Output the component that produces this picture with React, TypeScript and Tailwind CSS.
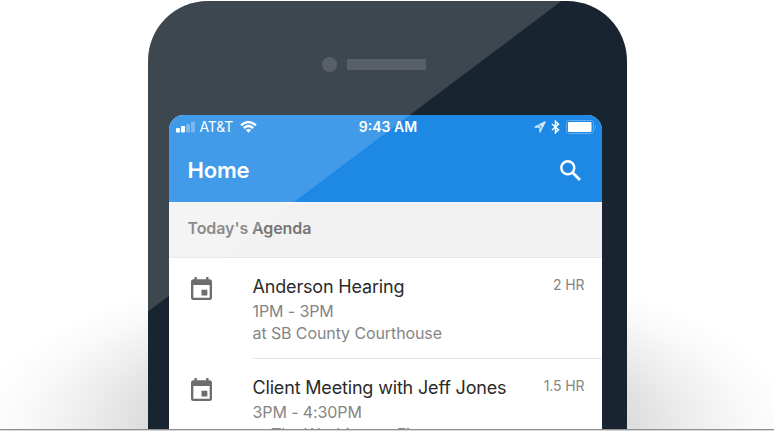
type Appointment = {
  title: string;
  time: string;
  place: string;
  duration: string;
};

const appointments: Appointment[] = [
  { title: 'Anderson Hearing', time: '1PM - 3PM', place: 'at SB County Courthouse', duration: '2 HR' },
  { title: 'Client Meeting with Jeff Jones', time: '3PM - 4:30PM', place: 'at The Washington Firm', duration: '1.5 HR' },
];

function EventIcon() {
  return (
    <svg viewBox="3 1 18 20" className="mt-[19px] h-[23px] w-[21px] shrink-0 fill-[#6d6d6d]" preserveAspectRatio="none">
      <path d="M17 12h-5v5h5v-5zM16 1v2H8V1H6v2H5c-1.11 0-1.99.9-1.99 2L3 19a2 2 0 0 0 2 2h14c1.100 0 2-.9 2-2V5c0-1.100-.9-2-2-2h-1V1h-2zm3 18H5V8h14v11z" />
    </svg>
  );
}

function StatusBar() {
  return (
    <div className="grid h-[24px] grid-cols-3 items-center text-[14px] leading-none text-white">
      <div className="flex items-center pl-[7px]">
        <svg width="20" height="12" viewBox="0 0 20 12" fill="#fff">
          <rect x="0" y="7" width="4" height="4.500" rx="1" />
          <rect x="5" y="5" width="4" height="6.500" rx="1" />
          <rect x="10" y="3" width="4" height="8.500" rx="1" opacity="0.3" />
          <rect x="15" y="0.500" width="4" height="11" rx="1" opacity="0.3" />
        </svg>
        <span className="ml-[4px] tracking-[-0.2px]">AT&amp;T</span>
        <svg className="ml-[7px]" width="17" height="12" viewBox="0 0 17 12" fill="none" stroke="#fff">
          <path d="M1 4.300Q8.500 -2.200 16 4.300" strokeWidth="2.200" />
          <path d="M3.700 7.100Q8.500 2.900 13.300 7.100" strokeWidth="2.200" />
          <path d="M5.800 9.100Q8.500 6.900 11.200 9.100L8.500 11.800Z" fill="#fff" stroke="none" />
        </svg>
      </div>
      <span className="pl-[6px] text-center font-semibold">9:43 AM</span>
      <div className="flex items-center justify-end pr-[4px]">
        <svg width="12" height="12" viewBox="0 0 12 12" fill="none" stroke="#d5e9fb" strokeWidth="1.300" strokeLinejoin="round">
          <path d="M10.800 1.200L1 6H6V11Z" />
          <path d="M10.800 1.200L6.500 3.500L8.500 5.800Z" fill="#d5e9fb" />
        </svg>
        <svg className="ml-[5px]" width="9" height="14" viewBox="0 0 9 14" fill="none" stroke="#fff" strokeWidth="1.500">
          <path d="M1 4L7.500 9.800L4.500 12.600V1.400L7.500 4.200L1 10" />
        </svg>
        <svg className="ml-[6px]" width="31" height="14" viewBox="0 0 31 14">
          <rect x="0.500" y="0.500" width="27" height="13" rx="3" fill="none" stroke="#64acef" />
          <rect x="2" y="2" width="23.500" height="10" rx="1" fill="#fff" />
          <path d="M29 5Q30.500 7 29 9Z" fill="#8ec3f3" />
        </svg>
      </div>
    </div>
  );
}

function AppointmentRow({ item }: { item: Appointment }) {
  return (
    <li className="flex h-[101px] shrink-0 pl-[22px]">
      <EventIcon />
      <div className="ml-[41px] flex flex-1 justify-between border-b border-[#e6e6e6] pr-[17px] whitespace-nowrap">
        <div className="pt-[17px] text-[16px] leading-[22px] tracking-[-0.1px] text-[#858585]">
          <h2 className="mb-px text-[18px] leading-[24px] tracking-[-0.17px] text-[#2b2b2b]">{item.title}</h2>
          <p>{item.time}</p>
          <p>{item.place}</p>
        </div>
        <span className="pt-[18px] text-[14px] leading-[18px] tracking-[-0.1px] text-[#858585]">{item.duration}</span>
      </div>
    </li>
  );
}

export default function App() {
  return (
    <main className="h-[435px] w-[774px] overflow-hidden bg-white font-['Inter',sans-serif]">
      <div className="flex h-[430px] justify-center bg-[radial-gradient(ellipse_410px_170px_at_387px_430px,#cccccc_0%,#d2d2d2_45%,#dedede_60%,#ededed_74%,#f9f9f9_88%,#ffffff_100%)] pt-px">
        <div className="relative h-[429px] w-[479px] overflow-hidden rounded-t-[60px] bg-[#18242f]">
          <div className="flex h-[114px] items-center gap-[10px] pt-[12px] pl-[174px]">
            <span className="size-[15px] rounded-full bg-[#39414b]" />
            <span className="h-[11px] w-[79px] bg-[#39414b]" />
          </div>
          <div className="ml-[21px] flex h-[315px] w-[433px] flex-col overflow-hidden rounded-t-[15px] bg-white">
            <header className="h-[87px] shrink-0 bg-[#1e88e5]">
              <StatusBar />
              <div className="flex h-[63px] items-center justify-between pr-[20px] pl-[19px]">
                <h1 className="text-[22px] font-semibold tracking-[-0.2px] text-white">Home</h1>
                <svg width="23" height="23" viewBox="0 0 23 23" fill="none" stroke="#fff" strokeWidth="2.400">
                  <circle cx="8.800" cy="8.800" r="6.500" />
                  <path d="M13.500 13.500L21 21" strokeWidth="2.800" />
                </svg>
              </div>
            </header>
            <div className="flex h-[56px] shrink-0 items-center border-t border-b border-t-[#f8f8f8] border-b-[#e8e8e8] bg-[#f2f2f2] pb-[4px] pl-[19px] text-[16px] font-semibold tracking-[-0.1px] text-[#767676]">
              Today's Agenda
            </div>
            <ul className="flex flex-col">
              {appointments.map((item) => (
                <AppointmentRow key={item.title} item={item} />
              ))}
            </ul>
          </div>
          <div className="pointer-events-none absolute inset-0 bg-white/16 [clip-path:polygon(0_0,414px_0,0_311px)]" />
        </div>
      </div>
      <div className="relative -mt-px h-[2px] border-t border-[#8f8f8f] bg-[#d8d8d8]" />
    </main>
  );
}
